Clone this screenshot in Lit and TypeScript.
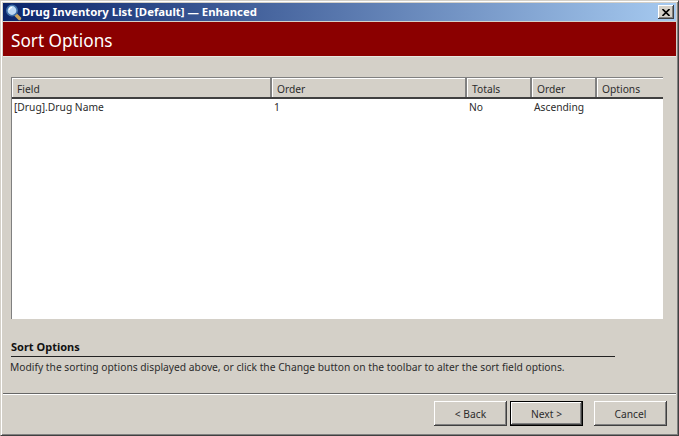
import { LitElement, html, css } from "lit";
import { customElement } from "lit/decorators.js";

@customElement("app-root")
export class AppRoot extends LitElement {
  static styles = css`
    :host { display: block; width: 679px; height: 436px; }
    * { box-sizing: border-box; }
    .window {
      width: 679px; height: 436px; background: #d4d0c8;
      display: flex; flex-direction: column;
      border: 1px solid; border-color: #d4d0c8 #404040 #404040 #d4d0c8;
      box-shadow: inset 1px 1px 0 #fff, inset -1px -1px 0 #808080;
      padding: 2px 2px 1px 2px;
      font: 10.25px "Noto Sans", Tahoma, sans-serif; color: #2c2c2c;
    }
    .title {
      height: 18px; flex: none; display: flex; align-items: center; padding: 0 2px 0 2px;
      background: linear-gradient(90deg, #0a246a, #a6caf0);
      color: #fff; font: bold 11.35px "Noto Sans", Tahoma, sans-serif;
    }
    .title svg.ic { flex: none; }
    .title .t { flex: 1; padding-bottom: 1px; }
    .close {
      width: 16px; height: 14px; background: #d4d0c8; display: flex; align-items: center; justify-content: center;
      box-shadow: inset -1px -1px 0 #404040, inset 1px 1px 0 #fff, inset -2px -2px 0 #808080;
    }
    .banner {
      height: 35px; flex: none; margin-top: 1px; background: #8b0000; color: #fff;
      font: 17.2px "Noto Sans", Tahoma, sans-serif; display: flex; align-items: center; padding: 2px 0 0 8px;
      border-bottom: 1px solid #e8e6e0;
    }
    .tablewrap { flex: none; margin: 20px 13px 0 8px; height: 242px; background: #fff;
      border-left: 1px solid #808080; border-top: 1px solid #808080; display: flex; flex-direction: column; }
    .row { display: grid; grid-template-columns: 260px 195px 65px 65px 66px; }
    .head { background: #d4d0c8; height: 21px; border-bottom: 2px solid #404040; }
    .head div { padding: 4px 0 0 5px; border-right: 2px solid #808080; box-shadow: inset 1px 1px 0 #fff; height: 19px; }
    .head div:last-child { border-right: none; }
    .body div { padding: 1px 0 0 2px; height: 18px; white-space: nowrap; }
    .info { flex: none; margin: 21px 0 0 8px; }
    .info h4 { margin: 0; font: bold 11px "Noto Sans", Tahoma, sans-serif; color: #111; height: 17px; width: 604px; border-bottom: 1px solid #222; line-height: 14px; }
    .info p { margin: 3px 0 0 -1px; line-height: 15px; }
    .rule { flex: none; margin-top: 18px; height: 2px; background: #fff; border-top: 1px solid #666; }
    .foot { flex: 1; display: flex; align-items: flex-start; justify-content: flex-end; padding: 6px 9px 0 0; }
    .btn { width: 73px; height: 25px; background: #d4d0c8; display: flex; align-items: center; justify-content: center;
      box-shadow: inset -1px -1px 0 #404040, inset 1px 1px 0 #fff, inset -2px -2px 0 #808080; }
    .btn.def { border: 1px solid #000; margin: 0 11px 0 3px; }
  `;
  render() {
    return html`<div class="window">
      <div class="title">
        <svg class="ic" width="17" height="17" viewBox="0 0 17 17">
          <path d="M9.5 9.5 L14.5 14.5" stroke="#c9a25a" stroke-width="3.4" stroke-linecap="round"/>
          <circle cx="7" cy="6.5" r="5.2" fill="#bcd8f4" stroke="#3d6ea8" stroke-width="1.6"/>
          <path d="M4.2 6 A3 3 0 0 1 7 3.5" stroke="#fff" stroke-width="1.2" fill="none"/>
        </svg>
        <span class="t">Drug Inventory List [Default] — Enhanced</span>
        <div class="close"><svg width="8" height="7" viewBox="0 0 8 7"><path d="M0.5 0 L7.5 7 M7.5 0 L0.5 7" stroke="#000" stroke-width="1.6"/></svg></div>
      </div>
      <div class="banner">Sort Options</div>
      <div class="tablewrap">
        <div class="row head"><div>Field</div><div>Order</div><div>Totals</div><div>Order</div><div>Options</div></div>
        <div class="row body"><div>[Drug].Drug Name</div><div>1</div><div>No</div><div>Ascending</div><div></div></div>
      </div>
      <div class="info">
        <h4>Sort Options</h4>
        <p>Modify the sorting options displayed above, or click the Change button on the toolbar to alter the sort field options.</p>
      </div>
      <div class="rule"></div>
      <div class="foot">
        <div class="btn">&lt; Back</div>
        <div class="btn def">Next &gt;</div>
        <div class="btn">Cancel</div>
      </div>
    </div>`;
  }
}
